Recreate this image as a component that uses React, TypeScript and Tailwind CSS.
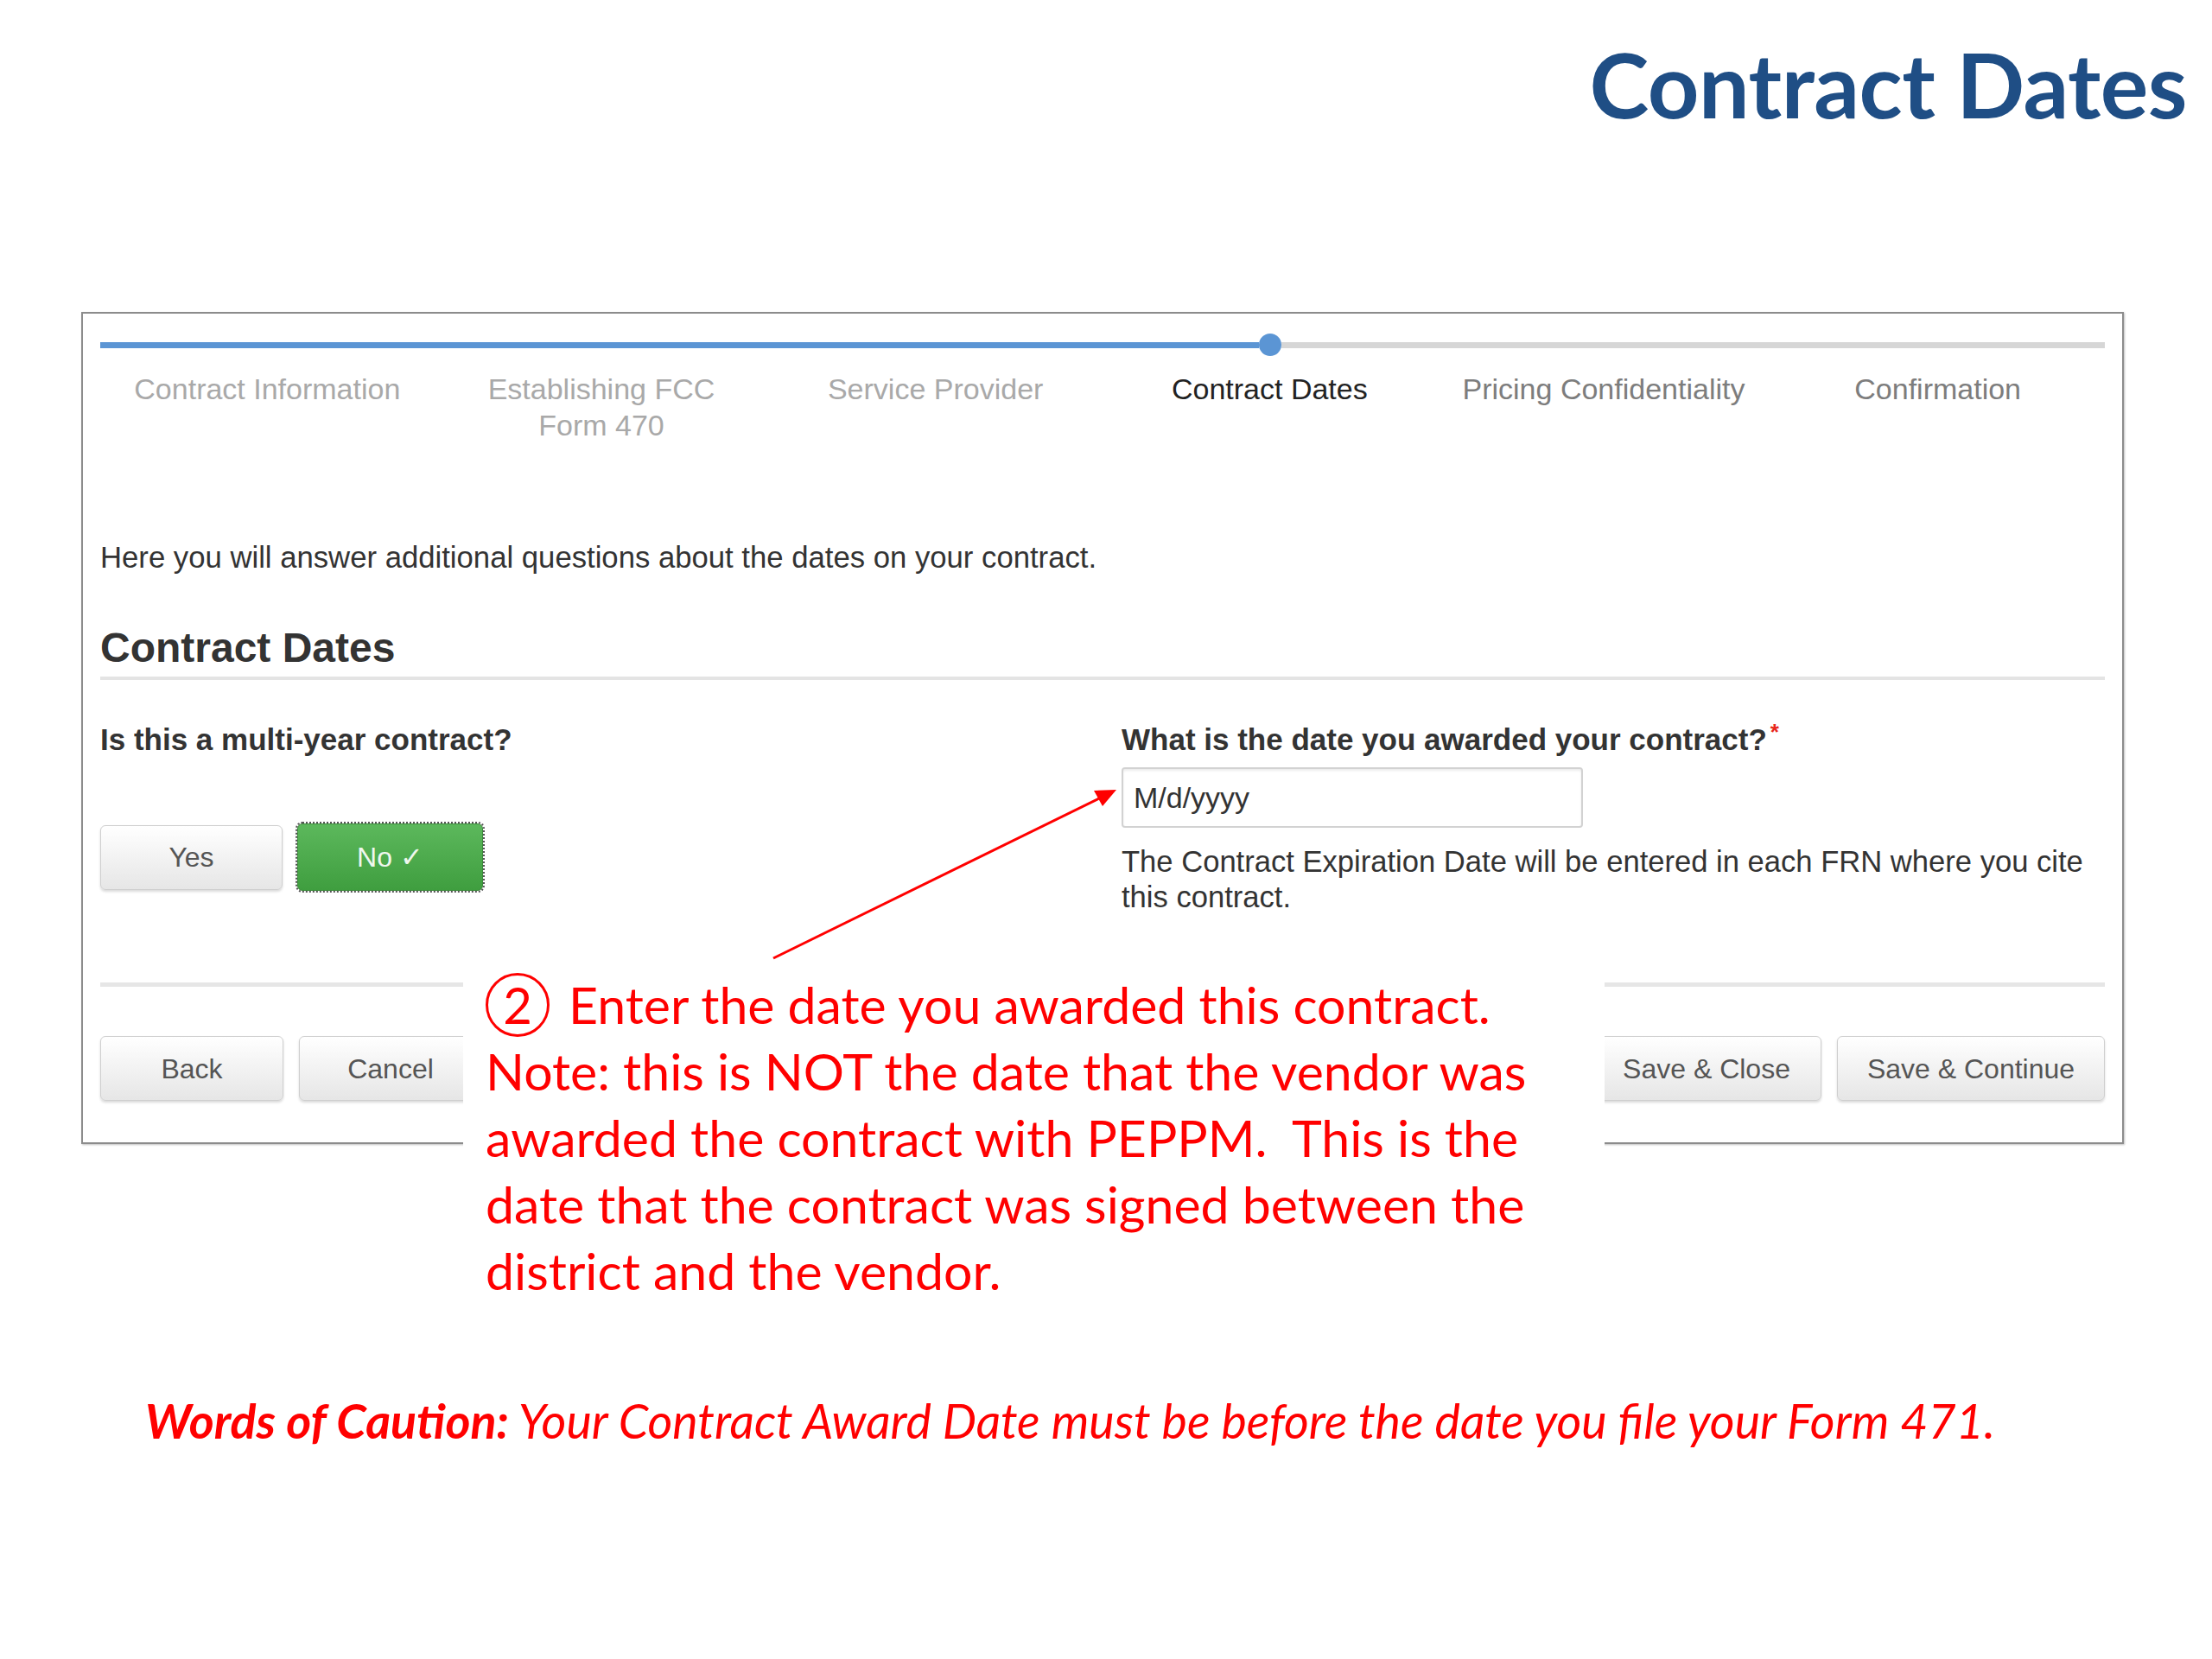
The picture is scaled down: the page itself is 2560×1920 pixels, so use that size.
import React from 'react';

const steps = [
  { lines: ['Contract Information'], tone: 'done' },
  { lines: ['Establishing FCC', 'Form 470'], tone: 'done' },
  { lines: ['Service Provider'], tone: 'done' },
  { lines: ['Contract Dates'], tone: 'active' },
  { lines: ['Pricing Confidentiality'], tone: 'todo' },
  { lines: ['Confirmation'], tone: 'todo' },
];

function GrayButton({ label, className = '' }: { label: string; className?: string }) {
  return (
    <button
      className={`h-[75px] rounded-[6px] border border-[#cfcfcf] bg-gradient-to-b from-white to-[#e6e6e6] text-[32px] text-[#555] shadow-[0_2px_3px_rgba(0,0,0,0.15)] ${className}`}
    >
      {label}
    </button>
  );
}

export default function App() {
  return (
    <div className="relative w-[2560px] h-[1920px] overflow-hidden bg-white font-['Liberation_Sans',Arial,sans-serif]">
      {/* Slide title */}
      <div className="flex justify-end pr-[29px] pt-[45px]">
        <h1 className="font-['Lato',sans-serif] font-bold text-[104px] leading-none tracking-[-0.5px] text-[#1f4e85]">
          Contract Dates
        </h1>
      </div>

      {/* Form screenshot panel */}
      <div className="ml-[94px] mt-[212px] w-[2364px] border-2 border-[#8c8c8c] px-[20px] pb-[48px] pt-[23px] shadow-[1px_1px_2px_rgba(0,0,0,0.25)]">
        {/* progress bar */}
        <div className="flex h-[26px] items-center">
          <div className="h-[7px] w-[1341px] bg-[#5b95d4]" />
          <div className="h-[26px] w-[26px] rounded-full bg-[#5b95d4]" />
          <div className="h-[7px] flex-1 bg-[#d6d6d6]" />
        </div>

        <div className="mt-[17px] grid grid-cols-6 text-center text-[34px] leading-[42px]">
          {steps.map((s) => (
            <div
              key={s.lines[0]}
              className={
                s.tone === 'active'
                  ? 'text-[#222]'
                  : s.tone === 'done'
                  ? 'text-[#a9a9a9]'
                  : 'text-[#7d7d7d]'
              }
            >
              {s.lines.map((l) => (
                <div key={l}>{l}</div>
              ))}
            </div>
          ))}
        </div>

        <p className="mt-[111px] text-[34.7px] leading-[42px] text-[#333]">
          Here you will answer additional questions about the dates on your contract.
        </p>

        <h2 className="mt-[56px] text-[48px] font-bold leading-[56px] text-[#333]">Contract Dates</h2>
        <div className="mt-[5px] h-[4px] bg-[#e4e4e4]" />

        <div className="mt-[48px] grid grid-cols-[1182px_1fr]">
          <div>
            <div className="text-[35px] font-bold leading-[42px] text-[#333]">Is this a multi-year contract?</div>
            <div className="mt-[76px] flex items-center gap-[17px]">
              <GrayButton label="Yes" className="w-[211px]" />
              <button className="h-[78px] w-[215px] rounded-[6px] border border-[#3d8b3d] bg-gradient-to-b from-[#5cb85c] to-[#3f9e3f] text-[32px] text-[#eef7ee] outline-2 outline-dotted outline-[#555]">
                No ✓
              </button>
            </div>
          </div>
          <div>
            <div className="text-[35px] font-bold leading-[42px] text-[#333]">
              What is the date you awarded your contract?
              <span className="relative -top-[12px] ml-[4px] text-[26px] text-[#e8271b]">*</span>
            </div>
            <div className="mt-[8px] flex h-[70px] w-[534px] items-center rounded-[4px] border-2 border-[#d2d2d2] pl-[12px] text-[34px] text-[#333] shadow-[inset_0_2px_3px_rgba(0,0,0,0.08)]">
              M/d/yyyy
            </div>
            <p className="mt-[19px] text-[34.6px] leading-[41px] text-[#333]">
              The Contract Expiration Date will be entered in each FRN where you cite this contract.
            </p>
          </div>
        </div>

        <div className="mt-[78px] h-[5px] bg-[#e6e6e6]" />

        <div className="mt-[57px] flex items-center">
          <GrayButton label="Back" className="w-[212px]" />
          <GrayButton label="Cancel" className="ml-[18px] w-[212px]" />
          <div className="flex-1" />
          <GrayButton label="Save & Close" className="w-[266px]" />
          <GrayButton label="Save & Continue" className="ml-[18px] w-[310px]" />
        </div>
      </div>

      {/* Words of caution */}
      <p className="mt-[290px] pl-[168px] font-['Lato',sans-serif] italic text-[55.5px] leading-[60px] text-[#ff0000]">
        <span className="font-bold">Words of Caution:</span> Your Contract Award Date must be before the date you file your Form 471.
      </p>

      {/* Callout box over the form */}
      <div className="absolute left-[536px] top-[1100px] h-[410px] w-[1321px] bg-white pl-[26px] pt-[24px] font-['Lato',sans-serif] text-[59px] leading-[77px] text-[#ff0000] whitespace-nowrap">
        <div className="flex items-center">
          <span className="inline-flex h-[74px] w-[74px] items-center justify-center rounded-full border-[3px] border-[#ff0000] text-[58px] leading-none">
            2
          </span>
          <span className="ml-[22px]">Enter the date you awarded this contract.</span>
        </div>
        <div>Note: this is NOT the date that the vendor was</div>
        <div>awarded the contract with PEPPM.&nbsp; This is the</div>
        <div>date that the contract was signed between the</div>
        <div>district and the vendor.</div>
      </div>

      {/* Arrow to the date field */}
      <svg className="absolute left-0 top-0" width="2560" height="1920" viewBox="0 0 2560 1920">
        <line x1="895" y1="1109" x2="1272" y2="924" stroke="#ff0000" strokeWidth="3" />
        <polygon points="1292,914 1266,915 1276,933" fill="#ff0000" />
      </svg>
    </div>
  );
}
